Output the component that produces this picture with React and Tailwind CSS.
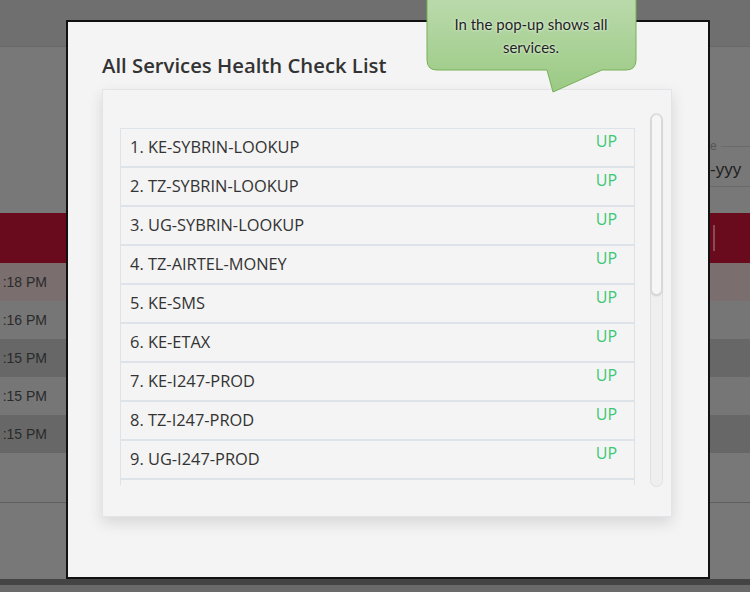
import React from "react";

const services = [
  "KE-SYBRIN-LOOKUP",
  "TZ-SYBRIN-LOOKUP",
  "UG-SYBRIN-LOOKUP",
  "TZ-AIRTEL-MONEY",
  "KE-SMS",
  "KE-ETAX",
  "KE-I247-PROD",
  "TZ-I247-PROD",
  "UG-I247-PROD",
];

const bgRows = [
  { time: ":18 PM", cls: "bg-[#7a6e6e]" },
  { time: ":16 PM", cls: "bg-[#767676]" },
  { time: ":15 PM", cls: "bg-[#676767]" },
  { time: ":15 PM", cls: "bg-[#767676]" },
  { time: ":15 PM", cls: "bg-[#676767]" },
];

function Callout() {
  return (
    <div className="absolute left-[426px] top-0 h-[94px] w-[212px]">
      <svg width="212" height="94" viewBox="0 0 212 94" className="absolute inset-0">
        <defs>
          <linearGradient id="cg" x1="0" y1="0" x2="0" y2="1">
            <stop offset="0" stopColor="#bddbaf" />
            <stop offset="1" stopColor="#9bca84" />
          </linearGradient>
        </defs>
        <path
          d="M1 -10 H199 Q210 -10 210 1 V60 Q210 70 200 70 H176 L127 92 L121 70 H11 Q1 70 1 60 Z"
          fill="url(#cg)"
          stroke="#77b157"
          strokeWidth="1"
        />
      </svg>
      <div className="relative flex h-[70px] w-[210px] flex-col items-center justify-center pt-[2px] text-center font-['Lato',sans-serif] text-[15px] leading-[23px] text-[#1f1f1f] [text-shadow:0_0_3px_#ffffff]">
        <span>In the pop-up shows all</span>
        <span>services.</span>
      </div>
    </div>
  );
}

export default function App() {
  return (
    <div className="relative h-[592px] w-[750px] overflow-hidden bg-[#787878] font-['Liberation_Sans',sans-serif]">
      {/* page behind the overlay */}
      <div className="h-[47px] border-b border-[#686868] bg-[#6f6f6f]" />
      <div className="flex h-[166px] justify-end">
        <div className="mt-[93px] w-[40px]">
          <div className="flex items-center gap-1 text-[12px] leading-none text-[#555]">
            <span>e</span>
            <div className="h-px flex-1 bg-[#6a6a6a]" />
          </div>
          <div className="mt-[7px] border-b border-[#6a6a6a] pb-[6px] text-[17px] leading-[21px] whitespace-nowrap text-[#1e1e1e]">
            -yyy
          </div>
        </div>
      </div>
      <div className="flex h-[50px] items-center justify-end bg-[#690b1d] pr-[35px]">
        <div className="h-[26px] w-[2px] bg-[#8a4a55]" />
      </div>
      {bgRows.map((r, i) => (
        <div key={i} className={`flex h-[38px] items-center ${r.cls}`}>
          <div className="flex w-[47px] justify-end text-[14px] whitespace-nowrap text-[#2a2a2a]">
            {r.time}
          </div>
        </div>
      ))}
      <div className="h-[50px] border-b border-[#5f5f5f]" />
      <div className="h-[76px]" />
      <div className="h-[6px] bg-[#444]" />
      <div className="h-[20px] bg-[#6a6a6a]" />

      {/* modal */}
      <div className="absolute left-[66px] top-[20px] h-[559px] w-[644px] border-2 border-[#111] bg-[#f4f4f4] px-[34px] pt-[29px]">
        <h2 className="font-['Open_Sans',sans-serif] text-[20.3px] leading-[28px] font-semibold text-[#333]">
          All Services Health Check List
        </h2>
        <div className="mt-[10px] h-[428px] w-[570px] border border-[#e2e4e8] bg-[#f4f4f4] pt-[23px] pr-[8px] pl-[17px] shadow-[0_6px_14px_rgba(0,0,0,0.12)]">
          <div className="flex h-[374px] gap-[15px]">
            <div className="h-[372px] w-[516px] overflow-hidden pt-[15px]">
              {services.map((s, i) => (
                <div
                  key={s}
                  className="relative flex h-[39px] items-center border border-[#dde3e9] pl-[9px] font-['Open_Sans',sans-serif] text-[16.4px] text-[#333]"
                >
                  <span>
                    {i + 1}. {s}
                  </span>
                  <span className="absolute top-[0px] right-[17px] text-[16px] leading-[24px] text-[#3cc774]">UP</span>
                </div>
              ))}
              <div className="h-[39px] border border-[#dde3e9]" />
            </div>
            <div className="relative h-full w-[13px] rounded-full border border-[#e0e0e0] bg-[#efefef]">
              <div className="h-[181px] w-full rounded-full border border-[#d8d8d8] bg-[#f6f6f6] shadow-[0_1px_2px_rgba(0,0,0,0.15)]" />
            </div>
          </div>
        </div>
      </div>

      <Callout />
    </div>
  );
}
